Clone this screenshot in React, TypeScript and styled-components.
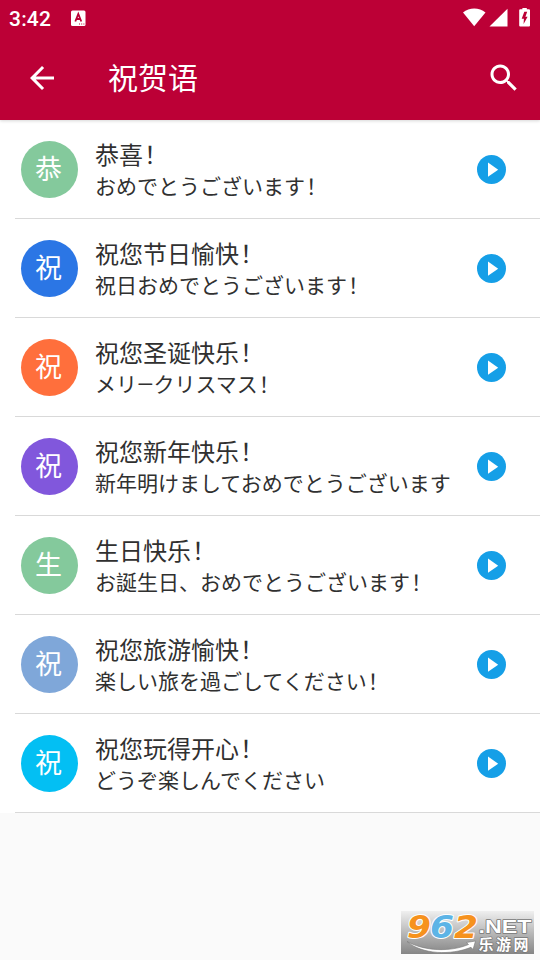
import React from "react";
import styled, { createGlobalStyle } from "styled-components";

const GlobalStyle = createGlobalStyle`
  * { box-sizing: border-box; }
  body {
    margin: 0;
    background: #fafafa;
    font-family: Roboto, "Noto Sans CJK SC", sans-serif;
    color: #303030;
  }
`;

const Screen = styled.div`
  display: flex;
  flex-direction: column;
  width: 540px;
  height: 960px;
  overflow: hidden;
  background: #fafafa;
`;

const Header = styled.header`
  height: 120px;
  flex: none;
  background: #bc0036;
  color: #fff;
  box-shadow: 0 1px 3px rgba(0, 0, 0, 0.16);
  z-index: 1;
`;

const StatusBar = styled.div`
  display: flex;
  align-items: center;
  height: 36px;
  padding: 0 9px 0 9px;
`;

const Clock = styled.span`
  width: 62px;
  font-size: 21px;
  line-height: 36px;
  font-weight: 500;
  letter-spacing: 0.2px;
  padding-top: 2px;
`;

const StatusIcons = styled.div`
  margin-left: auto;
  display: flex;
`;

const Toolbar = styled.div`
  display: flex;
  align-items: center;
  height: 84px;
  padding: 0 18px 0 24px;
`;

const IconButton = styled.button`
  display: flex;
  padding: 0;
  border: 0;
  background: none;
  color: inherit;
`;

const PageTitle = styled.h1`
  flex: 1;
  margin: 0 0 0 48px;
  padding-top: 2px;
  font-size: 30px;
  line-height: 44px;
  font-weight: 400;
`;

const List = styled.ul`
  margin: 0;
  padding: 0;
  list-style: none;
  background: #fff;
`;

const Row = styled.li`
  display: flex;
  align-items: center;
  height: 99px;
  margin-left: 15px;
  padding: 0 34px 0 6px;
  border-bottom: 1px solid #d9d9d9;
`;

const Avatar = styled.div<{ $color: string }>`
  flex: none;
  width: 57px;
  height: 57px;
  border-radius: 50%;
  background: ${(p) => p.$color};
  color: #fff;
  font-size: 27px;
  line-height: 58px;
  text-align: center;
  padding-right: 2px;
`;

const Texts = styled.div`
  flex: 1;
  margin-left: 17px;
  padding-top: 4px;
  white-space: nowrap;
`;

const Phrase = styled.div`
  font-size: 24px;
  line-height: 32px;
`;

const Translation = styled.div`
  font-size: 21px;
  line-height: 30px;
`;

const Mark = styled.span`
  margin-left: 1px;
`;

const WatermarkSlot = styled.footer`
  display: flex;
  justify-content: flex-end;
  margin-top: auto;
  padding: 0 6px 6px 0;

  svg {
    overflow: visible;
  }
`;

const phrases = [
  { color: "#84c99c", zh: "恭喜!", ja: "おめでとうございます!" },
  { color: "#2b76e5", zh: "祝您节日愉快!", ja: "祝日おめでとうございます!" },
  { color: "#ff6f3c", zh: "祝您圣诞快乐!", ja: "メリ—クリスマス!" },
  { color: "#8157dc", zh: "祝您新年快乐!", ja: "新年明けましておめでとうございます" },
  { color: "#84c99c", zh: "生日快乐!", ja: "お誕生日、おめでとうございます!" },
  { color: "#7fa7d9", zh: "祝您旅游愉快!", ja: "楽しい旅を過ごしてください!" },
  { color: "#03bff3", zh: "祝您玩得开心!", ja: "どうぞ楽しんでください" },
];

const Exclaimed = ({ text }: { text: string }) =>
  text.endsWith("!") ? (
    <>
      {text.slice(0, -1)}
      <Mark>{"\uff01"}</Mark>
    </>
  ) : (
    <>{text}</>
  );

const KeyboardIcon = () => (
  <svg width="15" height="17" viewBox="0 0 15 17">
    <rect y="0.5" width="14.5" height="15.5" rx="1.5" fill="#fff" />
    <path d="M4.3 11.5 7.3 4l3 7.5M5.4 9h3.8" fill="none" stroke="#bc0036" strokeWidth="1.8" />
    <path d="M8 14h1M10.2 14h1M12.4 14h1" stroke="#bc0036" strokeWidth="1" />
  </svg>
);

const SystemIcons = () => (
  <svg width="68" height="20" viewBox="0 0 68 20" fill="#fff">
    <path d="M0 4.4C6.3-.8 16.2-.8 22.5 4.4L11.2 18.3Z" />
    <path d="M44.5.7V18.6H26.5Z" />
    <path d="M59.4 1.2V0h4.4v1.2h2.1q1.1 0 1.1 1.1v15.2q0 1.1-1.1 1.1h-8.6q-1.1 0-1.1-1.1V2.3q0-1.1 1.1-1.1Z" />
    <path d="M61.3 3.8 58.7 10.7h2.2L60.6 16l4-7.3h-2.2l1.8-4.9Z" fill="#bc0036" />
  </svg>
);

const BackIcon = () => (
  <svg width="36" height="36" viewBox="0 0 24 24" fill="currentColor">
    <path d="M20 11H7.83l5.59-5.59L12 4l-8 8 8 8 1.41-1.41L7.83 13H20v-2z" />
  </svg>
);

const SearchIcon = () => (
  <svg width="36" height="36" viewBox="0 0 24 24" fill="currentColor">
    <path d="M15.5 14h-.79l-.28-.27C15.41 12.59 16 11.11 16 9.5 16 5.91 13.09 3 9.5 3S3 5.91 3 9.5 5.91 16 9.5 16c1.61 0 3.09-.59 4.23-1.57l.27.28v.79l5 4.99L20.49 19l-4.99-5zm-6 0C7.01 14 5 11.99 5 9.5S7.01 5 9.5 5 14 7.01 14 9.5 11.99 14 9.5 14z" />
  </svg>
);

const PlayIcon = () => (
  <svg width="29" height="29" viewBox="0 0 29 29">
    <circle cx="14.5" cy="14.5" r="14.5" fill="#159fe7" />
    <path d="M11 7.6V21.8L21.2 14.7Z" fill="#fff" />
  </svg>
);

const Watermark = () => (
  <svg width="133" height="43" viewBox="0 0 133 43">
    <defs>
      <linearGradient id="plate" x2="0" y2="1">
        <stop offset="0" stopColor="#efefef" />
        <stop offset="0.5" stopColor="#b9b9b9" />
        <stop offset="1" stopColor="#858585" />
      </linearGradient>
    </defs>
    <rect width="133" height="43" fill="url(#plate)" />
    <g
      fontFamily="'DejaVu Sans', sans-serif"
      fontSize="32"
      fontWeight="700"
      fontStyle="italic"
      stroke="#fff"
      strokeWidth="2"
      strokeLinejoin="round"
      paintOrder="stroke"
    >
      <text x="6" y="27" textLength="24" lengthAdjust="spacingAndGlyphs" fill="#f6921e">9</text>
      <text x="29" y="27" textLength="24" lengthAdjust="spacingAndGlyphs" fill="#5db4e6">6</text>
      <text x="53" y="27" textLength="24" lengthAdjust="spacingAndGlyphs" fill="#f6921e">2</text>
    </g>
    <path
      d="M6 30.5C24 40.5 50 41 67.5 33.5L65.5 31.5 74.5 30 72 38.5 70 36.3C50 44.5 21 43.5 6 30.5Z"
      fill="#fff"
      stroke="#777"
      strokeWidth="0.6"
    />
    <g fill="#fff" stroke="#777" strokeWidth="1.4" strokeLinejoin="round" paintOrder="stroke">
      <text x="77.5" y="21.5" fontFamily="'Liberation Sans', sans-serif" fontWeight="700" fontSize="19" textLength="53" lengthAdjust="spacingAndGlyphs">.NET</text>
      <text x="77.5" y="38.5" fontFamily="'Noto Sans CJK SC', sans-serif" fontWeight="700" fontSize="15" textLength="50">乐游网</text>
    </g>
  </svg>
);

export default function App() {
  return (
    <Screen>
      <GlobalStyle />
      <Header>
        <StatusBar>
          <Clock>3:42</Clock>
          <KeyboardIcon />
          <StatusIcons>
            <SystemIcons />
          </StatusIcons>
        </StatusBar>
        <Toolbar>
          <IconButton aria-label="返回">
            <BackIcon />
          </IconButton>
          <PageTitle>祝贺语</PageTitle>
          <IconButton aria-label="搜索">
            <SearchIcon />
          </IconButton>
        </Toolbar>
      </Header>
      <List>
        {phrases.map((p) => (
          <Row key={p.zh}>
            <Avatar $color={p.color}>{p.zh[0]}</Avatar>
            <Texts>
              <Phrase>
                <Exclaimed text={p.zh} />
              </Phrase>
              <Translation>
                <Exclaimed text={p.ja} />
              </Translation>
            </Texts>
            <IconButton aria-label="播放">
              <PlayIcon />
            </IconButton>
          </Row>
        ))}
      </List>
      <WatermarkSlot>
        <Watermark />
      </WatermarkSlot>
    </Screen>
  );
}
